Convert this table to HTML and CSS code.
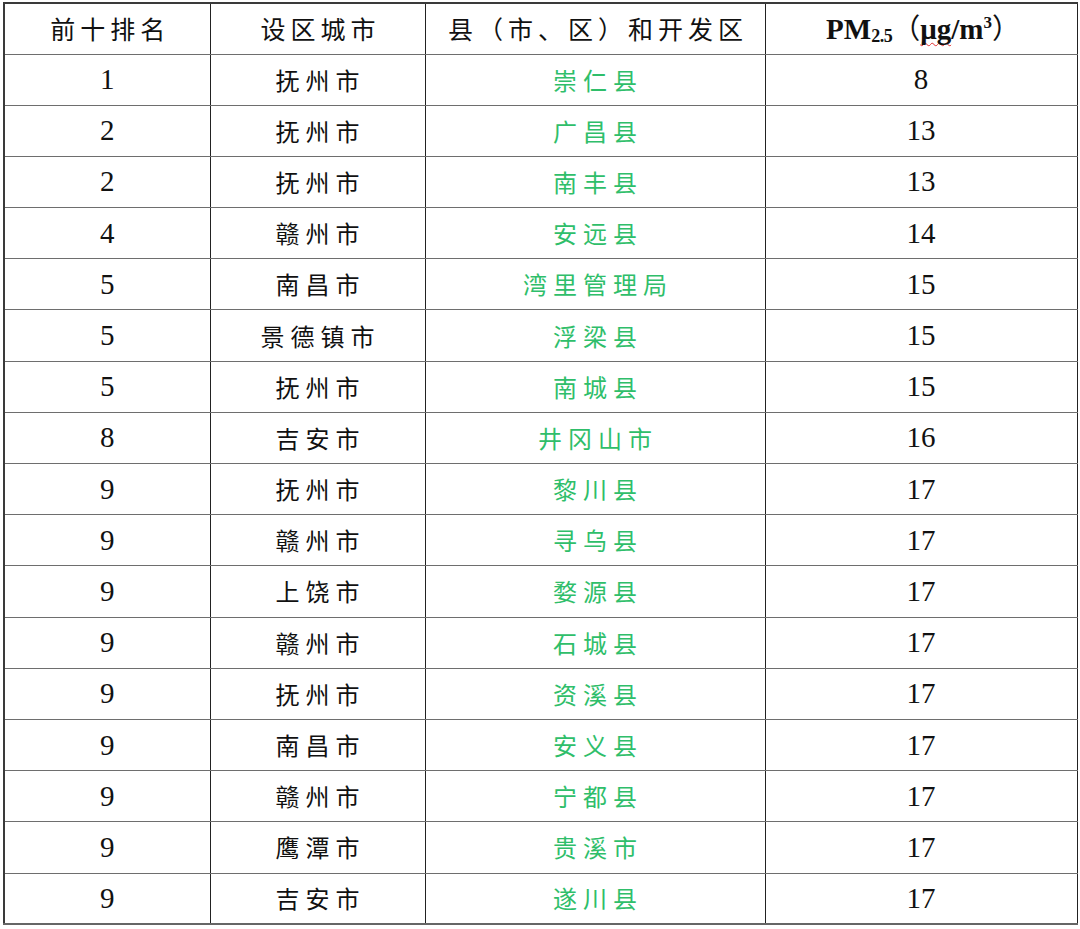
FILE: index.html
```html
<!DOCTYPE html>
<html lang="zh-CN">
<head>
<meta charset="utf-8">
<link rel="stylesheet" href="styles.css">
</head>
<body>
<table class="rank">
  <colgroup>
    <col class="c1"><col class="c2"><col class="c3"><col class="c4">
  </colgroup>
  <thead>
    <tr>
      <th class="cjk">前十排名</th>
      <th class="cjk">设区城市</th>
      <th class="cjk">县（市、区）和开发区</th>
      <th class="pm">PM<sub>2.5</sub><span class="paren">（</span><span class="unit">μg</span>/m<sup>3</sup><span class="paren">）</span></th>
    </tr>
  </thead>
  <tbody>
    <tr><td class="num">1</td><td class="cjk">抚州市</td><td class="cjk green">崇仁县</td><td class="num">8</td></tr>
    <tr><td class="num">2</td><td class="cjk">抚州市</td><td class="cjk green">广昌县</td><td class="num">13</td></tr>
    <tr><td class="num">2</td><td class="cjk">抚州市</td><td class="cjk green">南丰县</td><td class="num">13</td></tr>
    <tr><td class="num">4</td><td class="cjk">赣州市</td><td class="cjk green">安远县</td><td class="num">14</td></tr>
    <tr><td class="num">5</td><td class="cjk">南昌市</td><td class="cjk green">湾里管理局</td><td class="num">15</td></tr>
    <tr><td class="num">5</td><td class="cjk">景德镇市</td><td class="cjk green">浮梁县</td><td class="num">15</td></tr>
    <tr><td class="num">5</td><td class="cjk">抚州市</td><td class="cjk green">南城县</td><td class="num">15</td></tr>
    <tr><td class="num">8</td><td class="cjk">吉安市</td><td class="cjk green">井冈山市</td><td class="num">16</td></tr>
    <tr><td class="num">9</td><td class="cjk">抚州市</td><td class="cjk green">黎川县</td><td class="num">17</td></tr>
    <tr><td class="num">9</td><td class="cjk">赣州市</td><td class="cjk green">寻乌县</td><td class="num">17</td></tr>
    <tr><td class="num">9</td><td class="cjk">上饶市</td><td class="cjk green">婺源县</td><td class="num">17</td></tr>
    <tr><td class="num">9</td><td class="cjk">赣州市</td><td class="cjk green">石城县</td><td class="num">17</td></tr>
    <tr><td class="num">9</td><td class="cjk">抚州市</td><td class="cjk green">资溪县</td><td class="num">17</td></tr>
    <tr><td class="num">9</td><td class="cjk">南昌市</td><td class="cjk green">安义县</td><td class="num">17</td></tr>
    <tr><td class="num">9</td><td class="cjk">赣州市</td><td class="cjk green">宁都县</td><td class="num">17</td></tr>
    <tr><td class="num">9</td><td class="cjk">鹰潭市</td><td class="cjk green">贵溪市</td><td class="num">17</td></tr>
    <tr><td class="num">9</td><td class="cjk">吉安市</td><td class="cjk green">遂川县</td><td class="num">17</td></tr>
  </tbody>
</table>
</body>
</html>
```
FILE: styles.css
```css
html, body {
  margin: 0;
  padding: 0;
  background: #ffffff;
}

body {
  padding: 2px 0 0 3px;
}

.rank {
  border-collapse: collapse;
  table-layout: fixed;
  width: 1073px;
  color: #111;
  border-top: 2px solid #3a3a3a;
  border-left: 2px solid #3a3a3a;
  border-right: 1px solid #555;
  border-bottom: 2px solid #666;
}

.c1 { width: 206px; }
.c2 { width: 215px; }
.c3 { width: 340px; }
.c4 { width: 312px; }

.rank th,
.rank td {
  padding: 0;
  text-align: center;
  vertical-align: middle;
  border-top: 1px solid #6e6e6e;
  border-bottom: 1px solid #6e6e6e;
  border-left: 1px solid #222;
  border-right: 1px solid #222;
  font-weight: normal;
  white-space: nowrap;
}

.rank thead tr { height: 51px; }
.rank tbody tr { height: 51.2px; }

.cjk {
  font-family: "Noto Sans CJK SC", "Noto Sans CJK JP", sans-serif;
  font-size: 24px;
  font-weight: 300;
  letter-spacing: 6px;
  text-indent: 6px;
  line-height: 1;
}

th.cjk {
  color: #111;
  font-weight: 400;
  font-size: 25px;
  letter-spacing: 5px;
}

.green { color: #2fbe6a; }

.num {
  font-family: "Liberation Serif", "Times New Roman", serif;
  font-size: 29px;
  line-height: 1;
}

.pm {
  font-family: "Liberation Serif", "Times New Roman", serif;
  font-weight: bold !important;
  font-size: 29px;
  line-height: 1;
  text-indent: 4px;
}

.pm sub {
  font-size: 18px;
  vertical-align: -3px;
  letter-spacing: -0.5px;
}

.pm sup {
  font-size: 17px;
  vertical-align: 11px;
}

.pm .paren {
  font-family: "Noto Sans CJK SC", sans-serif;
  font-weight: 400;
  font-size: 28px;
}

.pm .unit {
  text-decoration: underline wavy #e03030;
  text-decoration-thickness: 1px;
  text-underline-offset: 3px;
  text-decoration-skip-ink: none;
}
```
